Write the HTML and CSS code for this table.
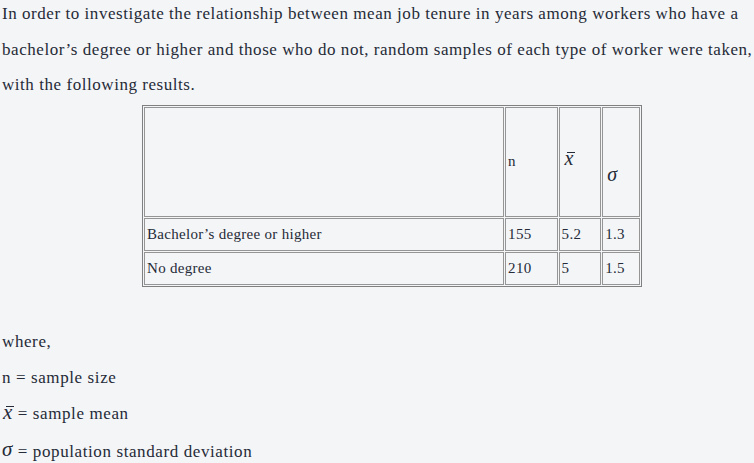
FILE: index.html
```html
<!DOCTYPE html>
<html>
<head>
<meta charset="utf-8">
<link rel="stylesheet" href="styles.css">
</head>
<body>
<p class="intro">In order to investigate the relationship between mean job tenure in years among workers who have a bachelor’s degree or higher and those who do not, random samples of each type of worker were taken, with the following results.</p>
<table class="data">
  <tr class="head">
    <td class="c-label"></td>
    <td class="c-n">n</td>
    <td class="c-x"><span class="xbar">x</span></td>
    <td class="c-s"><span class="sig">σ</span></td>
  </tr>
  <tr class="row">
    <td>Bachelor’s degree or higher</td>
    <td>155</td>
    <td>5.2</td>
    <td>1.3</td>
  </tr>
  <tr class="row">
    <td>No degree</td>
    <td>210</td>
    <td>5</td>
    <td>1.5</td>
  </tr>
</table>
<div class="legend">
  <p>where,</p>
  <p>n = sample size</p>
  <p><span class="xbar big">x</span> = sample mean</p>
  <p><span class="sig big">σ</span> = population standard deviation</p>
</div>
</body>
</html>
```

FILE: styles.css
```css
html, body {
  margin: 0;
  padding: 0;
  background: #f4f5f7;
}
body {
  font-family: "Liberation Serif", "Times New Roman", serif;
  color: #252b38;
  padding-left: 2px;
  overflow: hidden;
}
.intro {
  font-size: 17px;
  letter-spacing: 0.55px;
  line-height: 35.5px;
  margin: -4px 0 0;
}
.data {
  margin: 2px 0 0 140px;
  width: 500px;
  border: 1px solid #808080;
  border-spacing: 1px;
  font-size: 15px;
  letter-spacing: 0.3px;
}
.data td {
  border: 1px solid #959595;
  padding: 0 2px;
  vertical-align: middle;
  text-align: left;
}
.head td {
  height: 108px;
}
.row td {
  height: 31px;
}
.c-label { width: 360px; }
.c-n { width: 47px; }
.c-x { width: 37px; }
.c-s { width: 32px; }
.xbar {
  font-style: italic;
  font-size: 20px;
  line-height: 1;
  display: inline-block;
  position: relative;
  margin-left: 3px;
  top: -3px;
}
.xbar::before {
  content: "";
  position: absolute;
  left: 0.12em;
  right: -0.04em;
  top: 0.2em;
  height: 1px;
  background: #252b38;
}
.sig {
  font-style: italic;
  font-size: 20px;
  position: relative;
  top: 13px;
  margin-left: 2px;
}
.legend {
  margin-top: 37px;
}
.legend p {
  margin: 0;
  font-size: 17px;
  letter-spacing: 0.6px;
  line-height: 36px;
}
.legend .xbar {
  margin-left: 1px;
  top: 0;
  font-size: 21px;
}
.legend .sig {
  top: -1px;
  margin-left: 0;
  font-size: 21px;
}
```
